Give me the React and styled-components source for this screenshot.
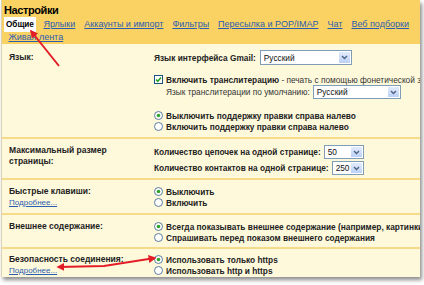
import React from 'react'
import styled, { createGlobalStyle } from 'styled-components'

const GlobalStyle = createGlobalStyle`
  body {
    margin: 0;
    background: #fff;
    font-family: "Liberation Sans", Arial, sans-serif;
  }
`

const Page = styled.div`
  position: relative;
  width: 424px;
  height: 285px;
  overflow: hidden;
`

const Panel = styled.div`
  width: 418px;
  height: 277px;
  margin-left: 1px;
  overflow: hidden;
  background: #fff9dc;
  border-left: 1px solid #ddd3b4;
  box-shadow: 2px 3px 4px rgba(0, 0, 0, 0.45);
  white-space: nowrap;
`

const Header = styled.div`
  background: #fad264;
  padding: 3px 0 1px 2px;
`

const Title = styled.div`
  font-size: 11px;
  line-height: 14px;
  font-weight: bold;
  letter-spacing: -0.4px;
  color: #000;
`

const Tabs = styled.div`
  display: flex;
  flex-wrap: wrap;
  align-items: center;
`

const Tab = styled.span`
  font-size: ${p => (p.$active ? '8.2px' : '9px')};
  line-height: ${p => (p.$active ? '13px' : '11px')};
  padding: ${p => (p.$active ? '1px 2px' : '0 4.5px')};
  margin-right: ${p => (p.$active ? '3px' : '0')};
  background: ${p => (p.$active ? '#fff' : 'transparent')};
  color: ${p => (p.$active ? '#000' : '#2a5db0')};
  font-weight: ${p => (p.$active ? 'bold' : 'normal')};
  text-decoration: ${p => (p.$active ? 'none' : 'underline')};
`

const Row = styled.div`
  display: grid;
  grid-template-columns: 152px 1fr;
  padding: ${p => p.$pad || '6px 0 5px'};
  border-top: ${p => (p.$first ? 'none' : '2px solid #f7da8a')};
`

const Label = styled.div`
  padding-left: 7px;
  font-size: 8.5px;
  line-height: 11px;
  font-weight: bold;
  color: #222;
  white-space: normal;
`

const More = styled.div`
  font-size: 8px;
  line-height: 11px;
  font-weight: normal;
  color: #2a5db0;
  text-decoration: underline;
`

const Options = styled.div`
  display: flex;
  flex-direction: column;
  font-size: 8.3px;
  color: #222;
`

const Line = styled.div`
  display: flex;
  align-items: center;
  gap: 3px;
  height: ${p => p.$h || 11}px;
  margin-top: ${p => p.$mt || 0}px;
  padding-left: ${p => p.$indent || 0}px;
  font-weight: bold;
`

const Light = styled.span`
  font-weight: normal;
  color: #333;
`

const SelectBox = styled.div`
  display: flex;
  align-items: stretch;
  box-sizing: border-box;
  width: ${p => p.$w}px;
  height: ${p => p.$h || 14}px;
  margin-left: ${p => p.$ml || 0}px;
  border: 1px solid #7f9db9;
  background: #fff;
  font-weight: normal;
  color: #111;
`

const SelectValue = styled.span`
  flex: 1;
  padding-left: 3px;
  display: flex;
  align-items: center;
`

const SelectArrow = styled.span`
  width: 13px;
  display: flex;
  align-items: center;
  justify-content: center;
  background: linear-gradient(#e3ecfd, #bcd0f6);
  border: 1px solid #fff;
  box-sizing: border-box;
`

const Overlay = styled.svg`
  position: absolute;
  left: 0;
  top: 0;
  pointer-events: none;
`

function Select({ value, w, h, ml }) {
  return (
    <SelectBox $w={w} $h={h} $ml={ml}>
      <SelectValue>{value}</SelectValue>
      <SelectArrow>
        <svg width="7" height="5" viewBox="0 0 7 5">
          <path d="M1 1 L3.5 3.5 L6 1" fill="none" stroke="#4d6185" strokeWidth="1.4" />
        </svg>
      </SelectArrow>
    </SelectBox>
  )
}

function Radio({ checked }) {
  return (
    <svg width="9" height="9" viewBox="0 0 9 9" style={{ flex: 'none' }}>
      <circle cx="4.5" cy="4.5" r="4" fill="#fff" stroke="#4b6d95" strokeWidth="0.9" />
      {checked && <circle cx="4.5" cy="4.5" r="1.8" fill="#2fa52f" />}
    </svg>
  )
}

function Checkbox() {
  return (
    <svg width="9" height="9" viewBox="0 0 9 9" style={{ flex: 'none' }}>
      <rect x="0.5" y="0.5" width="8" height="8" fill="#fff" stroke="#1c5180" />
      <path d="M2 4.5 L3.8 6.3 L7 2.6" fill="none" stroke="#21a121" strokeWidth="1.5" />
    </svg>
  )
}

export default function App() {
  return (
    <>
      <GlobalStyle />
      <Page>
        <Panel>
          <Header>
            <Title>Настройки</Title>
            <Tabs>
              <Tab $active>Общие</Tab>
              <Tab>Ярлыки</Tab>
              <Tab>Аккаунты и импорт</Tab>
              <Tab>Фильтры</Tab>
              <Tab>Пересылка и POP/IMAP</Tab>
              <Tab>Чат</Tab>
              <Tab>Веб подборки</Tab>
              <Tab>Живая лента</Tab>
            </Tabs>
          </Header>

          <Row $first>
            <Label style={{ paddingTop: 2 }}>Язык:</Label>
            <Options>
              <Line $h={15}>
                Язык интерфейса Gmail: <Select value="Русский" w={92} h={15} ml={1} />
              </Line>
              <Line $mt={9}>
                <Checkbox />
                <span>
                  Включить транслитерацию <Light>- печать с помощью фонетической записи</Light>
                </span>
              </Line>
              <Line $h={14} $indent={12}>
                <Light>Язык транслитерации по умолчанию:</Light>
                <Select value="Русский" w={88} />
              </Line>
              <Line $mt={11}>
                <Radio checked />
                Выключить поддержку правки справа налево
              </Line>
              <Line>
                <Radio />
                Включить поддержку правки справа налево
              </Line>
            </Options>
          </Row>

          <Row $pad="6px 0 3px">
            <Label>
              Максимальный размер
              <br />
              страницы:
            </Label>
            <Options>
              <Line $h={14}>
                Количество цепочек на одной странице: <Select value="50" w={40} />
              </Line>
              <Line $h={14} $mt={2}>
                Количество контактов на одной странице: <Select value="250" w={32} />
              </Line>
            </Options>
          </Row>

          <Row>
            <Label>
              Быстрые клавиши:
              <More>Подробнее...</More>
            </Label>
            <Options>
              <Line>
                <Radio checked />
                Выключить
              </Line>
              <Line>
                <Radio />
                Включить
              </Line>
            </Options>
          </Row>

          <Row $pad="6px 0 4px">
            <Label>Внешнее содержание:</Label>
            <Options>
              <Line>
                <Radio checked />
                Всегда показывать внешнее содержание (например, картинки в письмах)
              </Line>
              <Line>
                <Radio />
                Спрашивать перед показом внешнего содержания
              </Line>
            </Options>
          </Row>

          <Row $pad="5px 0 4px">
            <Label>
              Безопасность соединения:
              <More>Подробнее...</More>
            </Label>
            <Options>
              <Line>
                <Radio checked />
                Использовать только https
              </Line>
              <Line>
                <Radio />
                Использовать http и https
              </Line>
            </Options>
          </Row>
        </Panel>

        <Overlay width="424" height="285" viewBox="0 0 424 285">
          <defs>
            <marker id="head" viewBox="0 0 10 10" refX="8" refY="5" markerWidth="4" markerHeight="4" orient="auto-start-reverse">
              <path d="M0 0 L10 5 L0 10 Z" fill="#e21d25" />
            </marker>
          </defs>
          <line x1="59" y1="66" x2="31" y2="31" stroke="#e21d25" strokeWidth="2" markerEnd="url(#head)" />
          <polyline
            points="58,267 104,266 155,258"
            fill="none"
            stroke="#e21d25"
            strokeWidth="2"
            markerStart="url(#head)"
            markerEnd="url(#head)"
          />
        </Overlay>
      </Page>
    </>
  )
}
